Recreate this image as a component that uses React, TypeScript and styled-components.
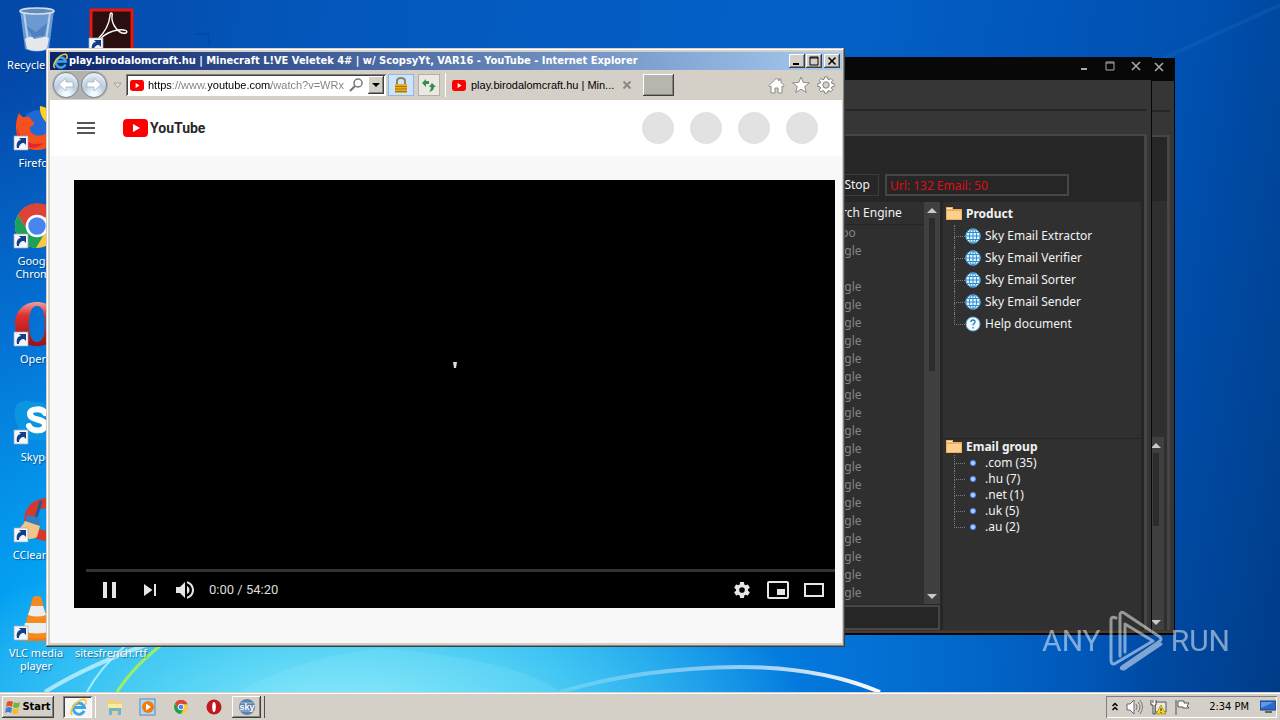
import React from 'react';
import styled, { createGlobalStyle, css } from 'styled-components';

const uiFont = '"DejaVu Sans Condensed", "Liberation Sans", sans-serif';
const tahoma = '"Noto Sans", "Open Sans", sans-serif';
const narrow = '"Liberation Sans", sans-serif';

const GlobalStyle = createGlobalStyle`
  *, *::before, *::after { box-sizing: border-box; }
  body { margin: 0; overflow: hidden; font-family: ${uiFont}; font-size: 11px; }
  button, input { font: inherit; color: inherit; }
  button { padding: 0; border: 0; background: none; display: flex; align-items: center; justify-content: center; }
  ul, h2, h1 { margin: 0; padding: 0; list-style: none; }
  svg { display: block; flex: none; }
`;

const Screen = styled.div`
  display: grid;
  grid-template-rows: 1fr 28px;
  height: 100vh;
`;

const Desktop = styled.main`
  position: relative;
  overflow: hidden;
  background:
    radial-gradient(ellipse 460px 190px at 27% 104%, #8cecfa 0%, #58d4f4dd 45%, #20b4f000 100%),
    radial-gradient(ellipse 900px 620px at 20% 98%, #08b0f4 0%, #04a0f2 30%, #0484e8aa 62%, #0468d800 100%),
    linear-gradient(100deg, #0448a8 0%, #0458bc 25%, #0460c8 60%, #0050b0 86%, #003c88 100%);
`;

const Wallpaper = styled.svg`
  position: absolute;
  inset: 0;
  width: 100%;
  height: 100%;
`;

/* ---------- desktop icons ---------- */

const IconGrid = styled.ul`
  position: relative;
  display: grid;
  grid-template-columns: 72px 72px;
  grid-auto-rows: 98px;
  column-gap: 3px;
  padding-top: 6px;
`;

const Shortcut = styled.li<{ $col: number; $row: number }>`
  grid-column: ${(p) => p.$col};
  grid-row: ${(p) => p.$row};
  text-align: center;
`;

const ShortcutLink = styled.a`
  display: flex;
  flex-direction: column;
  align-items: center;
  gap: 4px;
  color: #fff;
  font: 11px/13px ${tahoma};
  text-decoration: none;
  text-shadow: 1px 1px 1px #0248;
`;

const ShortcutArrow = () => (
  <>
    <path d="M2 32h14v14H2z" fill="#f4f6fa" stroke="#9ab" strokeWidth=".7" />
    <path d="M5 44c-1-5 1-8 4-8l-2-2h7v7l-2-2c-3 0-5 2-5 5z" fill="#123f86" />
  </>
);

const art: Record<string, React.ReactNode> = {
  bin: (
    <>
      <path d="M8 4h34l-5 39q-12 5-24 0z" fill="#8fb4dd" opacity=".75" />
      <path d="M12 7l5 35M38 7l-5 35" stroke="#d8e8f6" strokeWidth="2" opacity=".7" />
      <path d="M13 33q5-4 9-1 6-4 15 0l-2 11q-10 4-20 0z" fill="#e4e8ec" />
      <path d="M14 20l10 6 11-9-3 14-10 2z" fill="#3f78bb" opacity=".7" />
      <ellipse cx="25" cy="5" rx="17" ry="3" fill="#5d8cc0" stroke="#d4dde6" strokeWidth="1.6" />
    </>
  ),
  acrobat: (
    <>
      <rect x="4" y="4" width="41" height="43" fill="#2a0e10" stroke="#e8160c" strokeWidth="3" />
      <path
        d="M11 33c5-5 11-14 12-23 0-4 3-4 2 0-1 8 7 19 14 17 3-2-2-4-8-3-7 1-13 4-18 9-3 2-4 1-2 0z"
        fill="none"
        stroke="#fff"
        strokeWidth="1.4"
      />
      <ShortcutArrow />
    </>
  ),
  firefox: (
    <>
      <circle cx="27" cy="25" r="19" fill="#1f68d6" />
      <path d="M4 22c0-4 1-9 3-13 2 3 4 5 7 4 3-1 5 1 6 4 4 1 2 5-2 6-1 7 6 10 13 8 6-2 10-7 9-15l8 4c1 14-8 26-23 26S4 36 4 22z" fill="#f4511e" />
      <path d="M28 2c8 1 18 9 20 20 1 10-5 18-12 22 6-8 6-16 2-22-4-4-11-10-10-20z" fill="#ffd21c" />
      <path d="M5 24c4 14 15 18 27 15-8 8-22 6-26-7z" fill="#e8232e" />
      <ShortcutArrow />
    </>
  ),
  chrome: (
    <>
      <circle cx="25" cy="24" r="22" fill="#fbc93c" />
      <path d="M6 13A22 22 0 0 1 46 15H25L16 29z" fill="#dc4437" />
      <path d="M6 13A22 22 0 0 0 24 46L34 29 16 29z" fill="#1fa05a" />
      <circle cx="25" cy="24" r="10" fill="#4a84ee" stroke="#fff" strokeWidth="2.5" />
      <ShortcutArrow />
    </>
  ),
  opera: (
    <>
      <path
        d="M25 2c13 0 22 9 22 22S38 46 25 46 3 37 3 24 12 2 25 2zm0 4c-6 0-8 8-8 18s2 18 8 18 8-8 8-18-2-18-8-18z"
        fill="url(#operaRed)"
        fillRule="evenodd"
      />
      <ShortcutArrow />
    </>
  ),
  skype: (
    <>
      <path d="M5 6q8-6 15-2 20-2 26 18 4 10-2 16-6 6-16 4Q8 44 5 26 0 14 5 6z" fill="#0a95e2" />
      <path d="M33 15c-3-5-15-5-15 1 0 7 15 4 15 11s-13 7-16 1" fill="none" stroke="#fff" strokeWidth="6" strokeLinecap="round" />
      <ShortcutArrow />
    </>
  ),
  ccleaner: (
    <>
      <path d="M42 10A16 16 0 1 0 40 38" fill="none" stroke="#d8382a" strokeWidth="10" />
      <path d="M29 5L24 22" stroke="#1c5c9c" strokeWidth="3" />
      <path d="M15 19l14 3-1 8-15-3z" fill="#2f7fc4" />
      <path d="M13 25l15 5-3 11q-10 6-23-6 8-3 11-10z" fill="#f2c58a" />
      <ShortcutArrow />
    </>
  ),
  vlc: (
    <>
      <path d="M6 39h38l3 8H8z" fill="#f07d0a" />
      <path d="M21 3q4-2 8 0l11 39q-15 5-30 0z" fill="#f58a1f" />
      <path d="M19 12h12l3 9q-9 3-18 0zM13 29h24l2 8q-14 5-28 0z" fill="#eceff1" />
      <ShortcutArrow />
    </>
  ),
  none: null,
};

const shortcuts: Array<{ art: string; label?: string; col: number; row: number }> = [
  { art: 'bin', label: 'Recycle Bin', col: 1, row: 1 },
  { art: 'firefox', label: 'Firefox', col: 1, row: 2 },
  { art: 'chrome', label: 'Google Chrome', col: 1, row: 3 },
  { art: 'opera', label: 'Opera', col: 1, row: 4 },
  { art: 'skype', label: 'Skype', col: 1, row: 5 },
  { art: 'ccleaner', label: 'CCleaner', col: 1, row: 6 },
  { art: 'vlc', label: 'VLC media player', col: 1, row: 7 },
  { art: 'acrobat', col: 2, row: 1 },
  { art: 'none', label: 'sitesfrench.rtf', col: 2, row: 7 },
];

/* ---------- dark application windows ---------- */

const DarkWindow = styled.section<{ $right: number; $top: number }>`
  position: absolute;
  top: ${(p) => p.$top}px;
  right: ${(p) => p.$right}px;
  bottom: 57px;
  width: 50vw;
  display: flex;
  flex-direction: column;
  background: #363636;
  border: solid #060606;
  border-width: 0 1px 2px;
  box-shadow: inset 0 -2px #4a3a30;
  color: #f2f2f2;
  font: 12px/16px ${tahoma};
`;

const DarkTitle = styled.header`
  display: flex;
  justify-content: flex-end;
  gap: 10px;
  height: 23px;
  padding: 0 7px 4px;
  background: #080808;
`;

const DarkControl = styled.button`
  width: 16px;
  height: 18px;
`;

const DarkMenu = styled.div`
  height: 31px;
  margin-right: 4px;
  border-bottom: 2px solid #262626;
`;

const DarkFrame = styled.div`
  flex: 1;
  display: flex;
  flex-direction: column;
  min-height: 0;
  margin: 23px 4px 3px 4px;
  border: solid #464646;
  border-width: 2px 3px 0;
  background: #262626;
`;

const DarkToolbar = styled.div`
  display: flex;
  justify-content: flex-end;
  gap: 6px;
  padding: 38px 75px 6px 0;
`;

const DarkButton = styled.button`
  height: 22px;
  padding: 0 8px;
  border: 1px solid #3c3c3c;
  background: #262626;
`;

const CounterField = styled.input`
  width: 184px;
  height: 22px;
  padding: 0 3px;
  border: 2px solid #464646;
  background: #262626;
  color: #e00c10;
`;

const DarkContent = styled.div`
  flex: 1;
  display: flex;
  gap: 3px;
  min-height: 0;
  padding-right: 3px;
  background: #262626;
`;

const ListColumn = styled.div`
  flex: 1;
  display: flex;
  flex-direction: column;
  gap: 1px;
  min-width: 0;
`;

const ListArea = styled.div`
  flex: 1;
  display: flex;
  justify-content: flex-end;
  min-height: 0;
  background: #2f2f2f;
`;

const EngineTable = styled.table`
  flex: 0 0 106px;
  border-collapse: collapse;
  align-self: flex-start;
  th { height: 22px; padding: 1px 0 0 4px; font-weight: 400; text-align: left; border-bottom: 1px solid #262626; }
  td { height: 18px; padding: 0 0 0 3px; color: #848484; line-height: 14px; }
`;

const EmptyField = styled.input`
  width: 100%;
  height: 25px;
  border: 2px solid #464646;
  background: #262626;
`;

const ScrollTrack = styled.div<{ $width: number }>`
  width: ${(p) => p.$width}px;
  display: flex;
  flex-direction: column;
  align-items: center;
  justify-content: space-between;
  background: #404040;
`;

const ScrollThumb = styled.div<{ $height: number }>`
  width: 6px;
  height: ${(p) => p.$height}%;
  margin-bottom: auto;
  background: #2c2c2c;
`;

const Arrow = ({ up }: { up?: boolean }) => (
  <svg width="12" height="16" viewBox="0 0 12 16">
    <path d={up ? 'M6 6l5 5H1z' : 'M6 11L1 6h10z'} fill="#c8c8c8" />
  </svg>
);

const TreeColumn = styled.div`
  flex: 0 0 198px;
  display: grid;
  grid-template-rows: 235fr 192fr;
  padding-top: 1px;
  background: #303030;
`;

const TreePanel = styled.div`
  padding-left: 3px;
  & + & { border-top: 1px solid #242424; }
`;

const TreeHeading = styled.h2<{ $row: number }>`
  display: flex;
  align-items: center;
  gap: 4px;
  height: ${(p) => p.$row}px;
  font: bold 12px/16px ${tahoma};
`;

const TreeItem = styled.li<{ $row: number }>`
  display: flex;
  align-items: center;
  height: ${(p) => p.$row}px;
  padding-left: 8px;
`;

const Branch = styled.span`
  width: 11px;
  height: 100%;
  display: flex;
  flex-direction: column;
  &::before { content: ''; flex: 1; border: dotted #7c7c7c; border-width: 0 0 1px 1px; }
  &::after { content: ''; flex: 1; border-left: 1px dotted #7c7c7c; }
  li:last-child > &::after { border-color: transparent; }
`;

const TreeIcon = styled.svg`
  width: 16px;
  height: 16px;
  margin-right: 4px;
`;

const Folder = () => (
  <svg width="16" height="16" viewBox="0 0 16 16">
    <path d="M0 1h7v2h9v11H0z" fill="#f0ae60" />
    <path d="M1 2h5v1H1z" fill="#fff0d0" />
    <path d="M1 5h14v8H1z" fill="#fcd08c" />
  </svg>
);

const Globe = () => (
  <TreeIcon viewBox="0 0 16 16">
    <circle cx="8" cy="8" r="7.500" fill="#e8f6ff" />
    <g fill="none" stroke="#2a8ccc" strokeWidth="1">
      <circle cx="8" cy="8" r="7.200" />
      <ellipse cx="8" cy="8" rx="3.600" ry="7" />
      <path d="M8 1v14M1 8h14M2 4.500h12M2 11.500h12" />
    </g>
  </TreeIcon>
);

const Help = () => (
  <TreeIcon viewBox="0 0 16 16">
    <circle cx="8" cy="8" r="7" fill="#f4fbff" stroke="#57aee0" />
    <path d="M6 6q0-2 2-2t2 2q0 1-1 1.500T8 9.500M8 11v1.500" fill="none" stroke="#2578b8" strokeWidth="1.300" />
  </TreeIcon>
);

const Dot = () => (
  <TreeIcon viewBox="0 0 16 16">
    <circle cx="8" cy="8" r="3" fill="#5c88f0" />
    <circle cx="8" cy="8" r="2" fill="#a8ccff" />
  </TreeIcon>
);

const BackPanels = styled.div`
  flex: 1;
  display: flex;
  flex-direction: column;
  align-items: flex-end;
  min-height: 0;
  margin-top: 64px;
  padding-right: 3px;
  background: #2f2f2f;
`;

const BackScroll = styled.div`
  flex: 0 0 45%;
  display: flex;
  margin-top: auto;
`;

const products = ['Sky Email Extractor', 'Sky Email Verifier', 'Sky Email Sorter', 'Sky Email Sender'];
const groups = ['.com (35)', '.hu (7)', '.net (1)', '.uk (5)', '.au (2)'];
const engines = ['Yahoo', 'Google', '', ...Array(18).fill('Google')];

const CloseMark = () => (
  <svg width="10" height="10" viewBox="0 0 10 10">
    <path d="M1 1l8 8M9 1L1 9" stroke="#a8a8a8" strokeWidth="1.600" />
  </svg>
);

/* ---------- browser window ---------- */

const bevelOut = css`
  box-shadow: inset -1px -1px #404040, inset 1px 1px #fff, inset -2px -2px #868480;
`;
const bevelIn = css`
  box-shadow: inset 1px 1px #808080, inset -1px -1px #fff, inset 2px 2px #404040;
`;

const Browser = styled.section`
  position: absolute;
  inset: 48px 435px 45px 46px;
  display: flex;
  flex-direction: column;
  padding: 4px 3px 4px 4px;
  background: #d4d0c8;
  box-shadow: inset -1px -1px #404040, inset 1px 1px #d4d0c8, inset -2px -2px #868480, inset 2px 2px #fff;
`;

const TitleBar = styled.header`
  display: flex;
  align-items: center;
  gap: 1px;
  height: 18px;
  padding: 0 2px;
  background: linear-gradient(90deg, #0a246a, #a6caf0);
`;

const Title = styled.h1`
  flex: 1;
  overflow: hidden;
  color: #fff;
  font: bold 11px/18px ${uiFont};
  white-space: nowrap;
`;

const CaptionButtons = styled.div`
  display: flex;
  gap: 1px;
  & > :last-child { margin-left: 1px; }
`;

const CaptionButton = styled.button`
  width: 16px;
  height: 14px;
  background: #d4d0c8;
  ${bevelOut}
`;

const Toolbar = styled.div`
  display: flex;
  align-items: center;
  height: 30px;
  padding: 0 7px 0 2px;
`;

const NavPair = styled.div`
  display: flex;
  gap: 2px;
  padding: 1px;
  border-radius: 14px;
  background: #b4b2ae;
`;

const NavButton = styled.button`
  width: 26px;
  height: 26px;
  border: 1px solid #76889a;
  border-radius: 50%;
  background: radial-gradient(circle at 50% 90%, #f4fbff 10%, #b8ccdc 45%, #f0f5f8 90%);
`;

const HistoryButton = styled.button`
  width: 18px;
  height: 20px;
`;

const AddressBox = styled.div`
  flex: 0 0 260px;
  display: flex;
  align-items: center;
  gap: 4px;
  height: 22px;
  padding: 2px 2px 2px 4px;
  background: #fff;
  ${bevelIn}
`;

const UrlInput = styled.input`
  flex: 1;
  min-width: 0;
  height: 18px;
  padding: 0;
  border: 0;
  outline: 0;
  font: 11px/18px ${narrow};
  color: transparent;
  background: linear-gradient(90deg, #000 24px, #808080 24px, #808080 60px, #000 60px, #000 123px, #808080 123px);
  background-clip: text;
  -webkit-background-clip: text;
`;

const DropButton = styled.button`
  width: 16px;
  height: 18px;
  background: #d4d0c8;
  ${bevelOut}
`;

const ToolButton = styled.button<{ $active?: boolean }>`
  width: ${(p) => (p.$active ? 26 : 22)}px;
  height: 22px;
  margin-left: ${(p) => (p.$active ? 2 : 4)}px;
  border: 1px solid ${(p) => (p.$active ? '#8ab8e8' : '#b4b0a8')};
  background: ${(p) => (p.$active ? '#cfe4fa' : '#ece9e4')};
`;

const Tab = styled.div`
  flex: 0 0 198px;
  display: flex;
  align-items: center;
  gap: 5px;
  height: 24px;
  min-width: 0;
  margin-left: 5px;
  padding: 0 11px 0 6px;
  border-left: 1px solid #fff;
  font: 11px/18px ${narrow};
`;

const TabTitle = styled.span`
  flex: 1;
  white-space: nowrap;
`;

const NewTab = styled.button`
  width: 31px;
  height: 22px;
  background: #b8b4ae;
  ${bevelOut}
`;

const ToolIcons = styled.div`
  display: flex;
  gap: 7px;
  margin-left: auto;
`;

const YtMark = ({ width, height }: { width: number; height: number }) => (
  <svg width={width} height={height} viewBox="0 0 25 18" preserveAspectRatio="none">
    <rect width="25" height="18" rx="4" fill="#f00" />
    <path d="M10 5l7 4-7 4z" fill="#fff" />
  </svg>
);

const IeMark = ({ size }: { size: number }) => (
  <svg width={size} height={size} viewBox="0 0 16 16">
    <path d="M13.500 11.500A5 5 0 1 1 13.800 8.500H5" fill="none" stroke="#38a8ec" strokeWidth="2.600" />
    <path d="M3 15C-1 12 7 1 13.500 1.200 16 2 15 5 14.500 6" fill="none" stroke="#f8c838" strokeWidth="1.500" />
  </svg>
);

const Masthead = styled.header`
  display: flex;
  align-items: center;
  height: 56px;
  padding: 0 24px 0 24px;
  background: #fff;
`;

const MenuButton = styled.button`
  width: 24px;
  height: 24px;
  margin-right: 25px;
`;

const BrandLink = styled.a`
  display: flex;
  align-items: center;
  gap: 2px;
  color: #282828;
  font: bold 14px/20px Roboto, sans-serif;
  text-decoration: none;
`;

const AvatarRow = styled.div`
  display: flex;
  gap: 16px;
  margin-left: auto;
`;

const Avatar = styled.span`
  width: 32px;
  height: 32px;
  border-radius: 50%;
  background: #e2e2e2;
`;

const Page = styled.div`
  flex: 1;
  display: flex;
  min-height: 0;
  padding: 24px 7px 35px 24px;
  background: #f8f8f8;
`;

const Player = styled.div`
  flex: 1;
  display: flex;
  flex-direction: column;
  background: #000;
`;

const Stage = styled.div`
  flex: 1;
  display: grid;
  place-items: center;
`;

const Progress = styled.div`
  height: 3px;
  margin-left: 12px;
  background: #333;
`;

const Controls = styled.div`
  display: flex;
  align-items: center;
  height: 36px;
  padding: 0 3px 0 12px;
  color: #ddd;
  font: 13px/36px Roboto, sans-serif;
`;

const PlayerButton = styled.button<{ $wide?: boolean }>`
  width: ${(p) => (p.$wide ? 46 : 36)}px;
  height: 36px;
`;

const Time = styled.span`
  margin: 0 auto 0 5px;
`;

const Glyph = ({ d }: { d: string }) => (
  <svg width="36" height="36" viewBox="0 0 36 36">
    <path d={d} fill="#e6e6e6" fillRule="evenodd" />
  </svg>
);

const glyphs = {
  pause: 'M12 26h4V10h-4zM21 26h4V10h-4z',
  next: 'M12 24l8.500-6L12 12zM22 12v12h2V12z',
  volume:
    'M8 21h4l5 5V10l-5 5H8zM19 14v8c1.480-.68 2.500-2.230 2.500-4s-1.020-3.260-2.500-4zM19 11.290c2.890.86 5 3.540 5 6.710s-2.110 5.850-5 6.710v2.060c4.010-.91 7-4.490 7-8.770s-2.990-7.860-7-8.770z',
  settings:
    'm23.940 18.780c.03-.25.05-.51.05-.78 0-.27-.02-.52-.05-.78l1.680-1.320c.15-.12.19-.33.09-.51l-1.600-2.760c-.09-.17-.31-.24-.48-.17l-1.990.8c-.41-.32-.86-.58-1.350-.78l-.3-2.120c-.02-.19-.19-.33-.39-.33h-3.200c-.2 0-.36.14-.39.33l-.3 2.120c-.48.2-.93.47-1.350.78l-1.990-.8c-.18-.07-.39 0-.48.17l-1.600 2.760c-.1.17-.05.39.09.51l1.680 1.320c-.03.25-.05.52-.05.78 0 .26.02.52.05.78l-1.680 1.320c-.15.12-.19.33-.09.51l1.600 2.760c.09.17.31.24.48.17l1.990-.8c.41.32.86.58 1.350.78l.3 2.120c.02.19.19.33.39.33h3.200c.2 0 .36-.14.39-.33l.3-2.120c.48-.2.93-.47 1.350-.78l1.990.8c.18.07.39 0 .48-.17l1.600-2.760c.09-.17.05-.39-.09-.51zM18 20.790a2.800 2.800 0 1 1 0-5.600 2.800 2.800 0 0 1 0 5.600z',
  mini: 'M25 17h-8v6h8zM29 25V11a2 2 0 0 0-2-2H9a2 2 0 0 0-2 2v14a2 2 0 0 0 2 2h18a2 2 0 0 0 2-2zM27 25H9V11h18z',
  theater: 'M28 11v14H8V11zM10 13h16v10H10z',
};

/* ---------- watermark ---------- */

const Watermark = styled.div`
  position: absolute;
  right: 50px;
  bottom: 20px;
  display: flex;
  align-items: center;
  gap: 7px;
  color: #fff;
  font: 400 30px/62px Roboto, sans-serif;
  opacity: 0.5;
`;

/* ---------- taskbar ---------- */

const Taskbar = styled.footer`
  position: relative;
  display: flex;
  align-items: center;
  padding: 3px 3px 1px 2px;
  background: #d4d0c8;
  box-shadow: inset 0 1px #d4d0c8, inset 0 2px #fff;
`;

const StartButton = styled.button`
  gap: 1px;
  width: 52px;
  height: 22px;
  background: #d4d0c8;
  font: bold 11px/16px ${uiFont};
  ${bevelOut}
`;

const TaskList = styled.div`
  display: flex;
  align-items: center;
  gap: 4px;
  margin-left: 9px;
`;

const TaskButton = styled.button<{ $state?: 'pressed' | 'raised' }>`
  width: 29px;
  height: 22px;
  ${(p) => p.$state === 'pressed' && css`background: #f6f5f3; ${bevelIn}`}
  ${(p) => p.$state === 'raised' && css`${bevelOut}`}
`;

const Stack = styled.span<{ $pressed?: boolean }>`
  width: 3px;
  height: 22px;
  margin: 0 0 0 -3px;
  border: solid ${(p) => (p.$pressed ? '#fff' : '#505050')};
  border-width: 0 1px 0 0;
`;

const Tray = styled.div`
  display: flex;
  align-items: center;
  gap: 7px;
  width: 171px;
  height: 22px;
  margin-left: auto;
  padding: 0 1px 0 5px;
  box-shadow: inset 1px 1px #808080, inset -1px -1px #fff;
  font: 11px/16px ${uiFont};
`;

const Clock = styled.time`
  margin: 0 4px 0 auto;
`;

const TrayIcons = () => (
  <>
    <svg width="8" height="14" viewBox="0 0 8 14">
      <path d="M1.500 6L4 3.500 6.500 6M1.500 10L4 7.500 6.500 10" fill="none" stroke="#000" strokeWidth="1.500" />
    </svg>
    <svg width="17" height="16" viewBox="0 0 17 16">
      <path d="M1 5h3l4-4v14l-4-4H1z" fill="#fff" stroke="#666" />
      <path d="M10 5q2 3 0 6M12 3q4 5 0 10M14 1q5 7 0 14" fill="none" stroke="#777" />
    </svg>
    <svg width="17" height="16" viewBox="0 0 17 16">
      <path d="M5 3h11v10H5z" fill="#e8e8e8" stroke="#555" />
      <path d="M1 1v5h2v9h2V6h1V1M3 1v3" fill="#fff" stroke="#444" />
      <path d="M11 6l5 9H6z" fill="#f8d820" stroke="#a08000" strokeWidth=".7" />
      <path d="M11 9v3M11 13v1" stroke="#222" />
    </svg>
    <svg width="17" height="16" viewBox="0 0 17 16">
      <path d="M2 1v15M4 2h6v2h5l-2 3 2 2H9V8H4z" fill="#fff" stroke="#555" />
    </svg>
  </>
);

export default function App() {
  return (
    <Screen>
      <GlobalStyle />
      <Desktop>
        <Wallpaper viewBox="0 0 1280 692" preserveAspectRatio="none" aria-hidden="true">
          <defs>
            <linearGradient id="operaRed" x1="0" y1="0" x2="0" y2="1">
              <stop offset="0" stopColor="#f0a0a0" />
              <stop offset=".3" stopColor="#e03030" />
              <stop offset="1" stopColor="#a01010" />
            </linearGradient>
            <linearGradient id="arc" x1="0" y1="0" x2="1" y2="0">
              <stop offset="0" stopColor="#fff" stopOpacity=".15" />
              <stop offset=".5" stopColor="#fff" stopOpacity=".5" />
              <stop offset="1" stopColor="#fff" />
            </linearGradient>
          </defs>
          <path d="M45 692Q90 664 160 640" fill="none" stroke="#d8f8ff" strokeWidth="4" opacity=".7" />
          <path d="M87 692Q100 668 125 646" fill="none" stroke="#c0f4ff" strokeWidth="2" opacity=".8" />
          <path d="M117 692Q135 664 168 640" fill="none" stroke="#9cf060" strokeWidth="3" />
          <path d="M240 692Q290 660 380 648 520 660 560 692z" fill="#a8f0ff" opacity=".15" />
          <path d="M560 692Q640 668 740 667 820 667 880 692" fill="none" stroke="url(#arc)" strokeWidth="4" />
          <path d="M1160 60L1280 5" stroke="#2070c0" strokeWidth="4" opacity=".25" />
          <path d="M195 34h14v12" fill="none" stroke="#04408c" opacity=".7" />
        </Wallpaper>

        <IconGrid>
          {shortcuts.map((s) => (
            <Shortcut key={s.art} $col={s.col} $row={s.row}>
              <ShortcutLink href="#" aria-label={s.label ?? s.art}>
                <svg width="48" height="48" viewBox="0 0 48 48">{art[s.art]}</svg>
                {s.label}
              </ShortcutLink>
            </Shortcut>
          ))}
        </IconGrid>

        <DarkWindow $right={105} $top={58}>
          <DarkTitle>
            <DarkControl aria-label="Close"><CloseMark /></DarkControl>
          </DarkTitle>
          <DarkMenu />
          <DarkFrame>
            <BackPanels>
              <BackScroll>
                <ScrollTrack $width={16}>
                  <Arrow up />
                  <ScrollThumb $height={38} />
                  <Arrow />
                </ScrollTrack>
              </BackScroll>
            </BackPanels>
          </DarkFrame>
        </DarkWindow>

        <DarkWindow $right={128} $top={57}>
          <DarkTitle>
            <DarkControl aria-label="Minimize">
              <svg width="10" height="10" viewBox="0 0 10 10"><path d="M2 8h6" stroke="#a8a8a8" strokeWidth="2" /></svg>
            </DarkControl>
            <DarkControl aria-label="Maximize">
              <svg width="10" height="10" viewBox="0 0 10 10"><path d="M1 1h8v8H1zM1 2h8" fill="none" stroke="#a8a8a8" /></svg>
            </DarkControl>
            <DarkControl aria-label="Close"><CloseMark /></DarkControl>
          </DarkTitle>
          <DarkMenu />
          <DarkFrame>
            <DarkToolbar>
              <DarkButton>Stop</DarkButton>
              <CounterField aria-label="Progress" defaultValue="Url: 132 Email: 50" />
            </DarkToolbar>
            <DarkContent>
              <ListColumn>
                <ListArea>
                  <EngineTable>
                    <thead><tr><th>Search Engine</th></tr></thead>
                    <tbody>
                      {engines.map((name, i) => (
                        <tr key={i}><td>{name}</td></tr>
                      ))}
                    </tbody>
                  </EngineTable>
                  <ScrollTrack $width={16}>
                    <Arrow up />
                    <ScrollThumb $height={38} />
                    <Arrow />
                  </ScrollTrack>
                </ListArea>
                <EmptyField aria-label="Status" />
              </ListColumn>
              <TreeColumn>
                <TreePanel>
                  <TreeHeading $row={22}><Folder />Product</TreeHeading>
                  <ul>
                    {products.map((name) => (
                      <TreeItem key={name} $row={22}><Branch /><Globe />{name}</TreeItem>
                    ))}
                    <TreeItem $row={22}><Branch /><Help />Help document</TreeItem>
                  </ul>
                </TreePanel>
                <TreePanel>
                  <TreeHeading $row={16}><Folder />Email group</TreeHeading>
                  <ul>
                    {groups.map((name) => (
                      <TreeItem key={name} $row={16}><Branch /><Dot />{name}</TreeItem>
                    ))}
                  </ul>
                </TreePanel>
              </TreeColumn>
            </DarkContent>
          </DarkFrame>
        </DarkWindow>

        <Browser>
          <TitleBar>
            <IeMark size={16} />
            <Title>play.birodalomcraft.hu | Minecraft L!VE Veletek 4# | w/ ScopsyYt, VAR16 - YouTube - Internet Explorer</Title>
            <CaptionButtons>
              <CaptionButton aria-label="Minimize">
                <svg width="10" height="10" viewBox="0 0 10 10"><path d="M1 8h6" stroke="#000" strokeWidth="2" /></svg>
              </CaptionButton>
              <CaptionButton aria-label="Maximize">
                <svg width="10" height="10" viewBox="0 0 10 10"><path d="M1 1h8v8H1zM1 2h8" fill="none" stroke="#000" /></svg>
              </CaptionButton>
              <CaptionButton aria-label="Close">
                <svg width="10" height="10" viewBox="0 0 10 10"><path d="M1.500 1.500l7 7M8.500 1.500l-7 7" stroke="#000" strokeWidth="1.500" /></svg>
              </CaptionButton>
            </CaptionButtons>
          </TitleBar>
          <Toolbar>
            <NavPair>
              <NavButton aria-label="Back">
                <svg width="16" height="14" viewBox="0 0 16 14"><path d="M8 0v4h7v5H8v4L1 6.500z" fill="#fff" stroke="#9cb0c0" strokeWidth=".7" /></svg>
              </NavButton>
              <NavButton aria-label="Forward">
                <svg width="16" height="14" viewBox="0 0 16 14"><path d="M8 0v4H1v5h7v4l7-6.500z" fill="#fff" stroke="#9cb0c0" strokeWidth=".7" /></svg>
              </NavButton>
            </NavPair>
            <HistoryButton aria-label="Recent pages">
              <svg width="9" height="7" viewBox="0 0 9 7"><path d="M1 1h7L4.500 5.500z" fill="#e8e6e0" stroke="#a09c94" /></svg>
            </HistoryButton>
            <AddressBox>
              <YtMark width={14} height={11} />
              <UrlInput aria-label="Address" defaultValue="https://www.youtube.com/watch?v=WRx" />
              <svg width="16" height="16" viewBox="0 0 16 16">
                <circle cx="10" cy="6" r="4" fill="#fff" stroke="#777" strokeWidth="1.500" />
                <path d="M7 9l-5 5" stroke="#777" strokeWidth="2.200" />
              </svg>
              <DropButton aria-label="Show addresses">
                <svg width="8" height="5" viewBox="0 0 8 5"><path d="M0 0h8L4 4z" /></svg>
              </DropButton>
            </AddressBox>
            <ToolButton $active aria-label="Security report">
              <svg width="16" height="18" viewBox="0 0 16 18">
                <path d="M4 8V5q0-3 4-3t4 3v3" fill="none" stroke="#8c8460" strokeWidth="2" />
                <path d="M2 8h12v9H2z" fill="#e8b020" />
                <path d="M2 10.500h12M2 13h12M2 15.500h12" stroke="#a87408" />
              </svg>
            </ToolButton>
            <ToolButton aria-label="Refresh">
              <svg width="16" height="16" viewBox="0 0 16 16">
                <path d="M1 6l4-4v2h3v3H5v3zM15 10l-4-4-3 4h2q0 3-2 5 5-1 5-5z" fill="#349048" />
              </svg>
            </ToolButton>
            <Tab>
              <YtMark width={14} height={11} />
              <TabTitle>play.birodalomcraft.hu | Min...</TabTitle>
              <button aria-label="Close tab">
                <svg width="10" height="10" viewBox="0 0 10 10"><path d="M1.500 1.500l7 7M8.500 1.500l-7 7" stroke="#8c8884" strokeWidth="2" /></svg>
              </button>
            </Tab>
            <NewTab aria-label="New tab" />
            <ToolIcons>
              <button aria-label="Home">
                <svg width="17" height="17" viewBox="0 0 17 17"><path d="M8.500 1L1 8.500l1 1.500 1-1v7h4v-5h3v5h4V9l1 1 1-1.500-3-3V2h-2v2z" fill="#fff" stroke="#8c8a86" /></svg>
              </button>
              <button aria-label="Favorites">
                <svg width="18" height="18" viewBox="0 0 18 18"><path d="M9 1l2.300 5.500 6 .3-4.600 3.800 1.600 5.900L9 13.200l-5.300 3.300 1.600-5.900L.7 6.800l6-.3z" fill="#fff" stroke="#8c8a86" /></svg>
              </button>
              <button aria-label="Tools">
                <svg width="18" height="18" viewBox="0 0 18 18">
                  <g fill="#fff" stroke="#85827d">
                    <path d="M7.500 1h3l.4 2.200 1.300.6L14 2.500 15.800 4.300l-1.400 1.800.5 1.300 2.300.3v2.800l-2.300.4-.5 1.200 1.300 1.900-1.900 1.800-1.800-1.300-1.200.5-.3 2.200h-3L7.100 15l-1.200-.5-1.900 1.300L2.200 14l1.300-1.900-.5-1.200-2.200-.4V7.700L3 7.400l.5-1.300L2.200 4.300 4 2.500l1.900 1.300L7.100 3.200z" />
                    <circle cx="9" cy="9" r="3.200" fill="#d4d0c8" />
                  </g>
                </svg>
              </button>
            </ToolIcons>
          </Toolbar>
          <Masthead>
            <MenuButton aria-label="Guide">
              <svg width="24" height="24" viewBox="0 0 24 24"><path d="M3 7h18M3 12h18M3 17h18" stroke="#555" strokeWidth="2" /></svg>
            </MenuButton>
            <BrandLink href="#"><YtMark width={25} height={18} />YouTube</BrandLink>
            <AvatarRow><Avatar /><Avatar /><Avatar /><Avatar /></AvatarRow>
          </Masthead>
          <Page>
            <Player>
              <Stage>
                <svg width="6" height="36" viewBox="0 0 6 36"><path d="M1 5h4l-1 6H2z" fill="#ddd" /></svg>
              </Stage>
              <Progress />
              <Controls>
                <PlayerButton $wide aria-label="Pause"><Glyph d={glyphs.pause} /></PlayerButton>
                <PlayerButton aria-label="Next"><Glyph d={glyphs.next} /></PlayerButton>
                <PlayerButton aria-label="Mute"><Glyph d={glyphs.volume} /></PlayerButton>
                <Time>0:00 / 54:20</Time>
                <PlayerButton aria-label="Settings"><Glyph d={glyphs.settings} /></PlayerButton>
                <PlayerButton aria-label="Miniplayer"><Glyph d={glyphs.mini} /></PlayerButton>
                <PlayerButton aria-label="Theater mode"><Glyph d={glyphs.theater} /></PlayerButton>
              </Controls>
            </Player>
          </Page>
        </Browser>

        <Watermark>
          <span>ANY</span>
          <svg width="56" height="62" viewBox="0 0 56 62" fill="none" stroke="#fff" strokeWidth="3" strokeLinejoin="round" strokeLinecap="round">
            <path d="M8 8Q3 6 3 10V50q0 6 5 3L45 31 17 14V42" />
            <path d="M12 46V5q0-4 4-2L52 27q2 2 0 4L14 57q-2 2 2 2L53 34" />
          </svg>
          <span>RUN</span>
        </Watermark>
      </Desktop>

      <Taskbar>
        <StartButton>
          <svg width="16" height="16" viewBox="0 0 16 16">
            <path d="M2 3q3-2 6 0L7 8Q4 6 1 8z" fill="#e8502c" />
            <path d="M9 3q3 2 6 0l-1 5q-3 2-6 0z" fill="#70b83c" />
            <path d="M1 9q3-2 6 0l-1 5q-3-2-6 0z" fill="#3c80d8" />
            <path d="M8 9q3 2 6 0l-1 5q-3 2-6 0z" fill="#f4bc28" />
          </svg>
          Start
        </StartButton>
        <TaskList>
          <TaskButton $state="pressed" aria-label="Internet Explorer"><IeMark size={18} /></TaskButton>
          <Stack $pressed />
          <TaskButton aria-label="Explorer">
            <svg width="18" height="18" viewBox="0 0 18 18">
              <path d="M2 2h6l1 2h7v11H2z" fill="#f0d070" />
              <path d="M2 6h14v4H2z" fill="#faeaa0" />
              <path d="M3 10h12v7h-3v-4H6v4H3z" fill="#6cb4e0" />
            </svg>
          </TaskButton>
          <TaskButton aria-label="Media Player">
            <svg width="18" height="18" viewBox="0 0 18 18">
              <rect x="1" y="1" width="15" height="16" fill="#b4d8f4" stroke="#4c8cc8" />
              <circle cx="9" cy="9" r="6" fill="#f07c10" />
              <path d="M7 5.500l5 3.500-5 3.500z" fill="#fff" />
            </svg>
          </TaskButton>
          <TaskButton aria-label="Chrome">
            <svg width="14" height="14" viewBox="3 2 44 44">
              <circle cx="25" cy="24" r="22" fill="#fbc93c" />
              <path d="M6 13A22 22 0 0 1 46 15H25L16 29z" fill="#dc4437" />
              <path d="M6 13A22 22 0 0 0 24 46L34 29 16 29z" fill="#1fa05a" />
              <circle cx="25" cy="24" r="9" fill="#4a84ee" stroke="#fff" strokeWidth="3" />
            </svg>
          </TaskButton>
          <TaskButton aria-label="Opera">
            <svg width="16" height="16" viewBox="0 0 16 16">
              <circle cx="8" cy="8" r="7.500" fill="#c01820" />
              <ellipse cx="8" cy="8" rx="1.800" ry="5" fill="#fff" />
            </svg>
          </TaskButton>
          <TaskButton $state="raised" aria-label="Sky Email Extractor">
            <svg width="18" height="18" viewBox="0 0 18 18">
              <circle cx="9" cy="9" r="8" fill="#5c80b0" />
              <path d="M3 5h12M2 13h14" stroke="#a8c0dc" />
              <text x="9" y="12" textAnchor="middle" fontFamily="Liberation Sans" fontSize="9" fontWeight="700" fill="#fff">sky</text>
            </svg>
          </TaskButton>
          <Stack />
        </TaskList>
        <Tray>
          <TrayIcons />
          <Clock>2:34 PM</Clock>
          <svg width="16" height="14" viewBox="0 0 16 14">
            <path d="M0 1h16v9H0z" fill="#2c68c8" stroke="#183c78" />
            <path d="M1 2h13L1 8z" fill="#5c98ec" />
            <path d="M5 12h7" stroke="#606870" strokeWidth="2" />
          </svg>
        </Tray>
      </Taskbar>
    </Screen>
  );
}
